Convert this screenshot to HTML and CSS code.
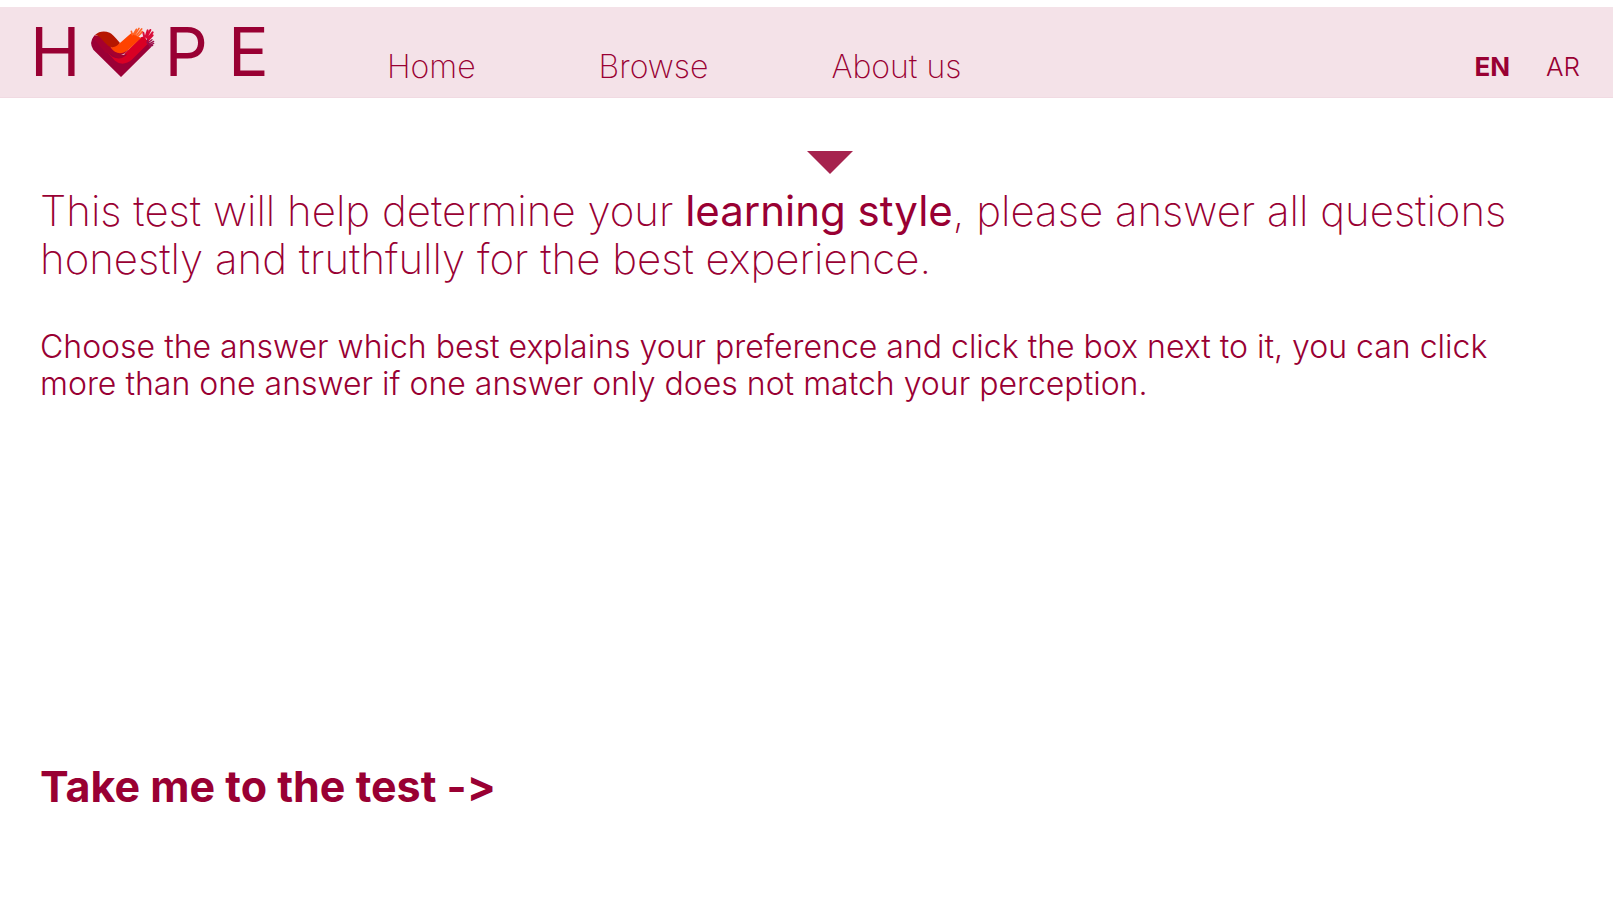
FILE: index.html
```html
<!DOCTYPE html>
<html lang="en">
<head>
<meta charset="utf-8">
<meta name="viewport" content="width=device-width, initial-scale=1">
<title>HOPE</title>
<link rel="stylesheet" href="styles.css">
</head>
<body>
<header class="header">
  <a class="logo" href="#">
    <span class="letter">H</span>
    <svg class="heart" viewBox="34 19 192 150" role="img" aria-label="O">
      <path fill="#9b0036" d="M44 45Q26 64 41 87L124 169 214 80 206 62 190 60 124 110 60 45Z"/>
      <path fill="#a6002f" d="M45 44Q62 48 84 72L110 98Q124 106 140 100L130 112Q108 114 96 100L78 96 40 52Z"/>
      <path fill="#d90024" d="M84 96L98 108Q122 120 140 104L191 50 210 64 158 116Q130 140 106 120Z"/>
      <path fill="#a6002f" d="M72 76L92 80Q116 104 148 86L136 98Q112 112 92 98Z"/>
      <path fill="#d90024" d="M148 86L184 50 196 46 200 60 150 104 134 100Z"/>
      <path fill="#b61600" d="M46 43Q64 27 90 36 98 39 121 67L112 79 98 82Q86 78 76 66L62 51Q54 43 46 43Z"/>
      <path fill="#ff4300" d="M92 80Q108 82 120 68L156 36 184 52 148 86Q116 112 92 80Z"/>
      <path fill="none" stroke="#ff6426" stroke-width="5" stroke-linecap="round" d="M158 42L155 32M162 40L170 26M166 42L178 23M171 44L186 25M176 46L188 33"/>
      <path fill="none" stroke="#d90b38" stroke-width="6" stroke-linecap="round" d="M194 50L191 36M198 48L204 29M201 50L212 28M204 54L219 35M206 58L219 44"/>
      <path fill="none" stroke="#9b0d49" stroke-width="4" stroke-linecap="round" d="M202 66L204 57M203 68L217 57M206 71L222 62M209 74L222 68M210 78L219 74"/>
    </svg>
    <span class="letter">P</span>
    <span class="letter last">E</span>
  </a>
  <nav class="nav">
    <a href="#">Home</a>
    <a href="#">Browse</a>
    <a href="#">About us</a>
  </nav>
  <div class="languages">
    <a class="current" href="#">EN</a>
    <a href="#">AR</a>
  </div>
</header>
<main class="main">
  <svg class="marker" viewBox="0 0 46 23" aria-hidden="true"><path fill="#a6234e" d="M0 0H46L23 23Z"/></svg>
  <h1 class="intro">This test will help determine your <strong>learning style</strong>, please answer all questions<br>honestly and truthfully for the best experience.</h1>
  <p class="hint">Choose the answer which best explains your preference and click the box next to it, you can click<br>more than one answer if one answer only does not match your perception.</p>
  <a class="start" href="#">Take me to the test -&gt;</a>
</main>
</body>
</html>
```
FILE: styles.css
```css
* { box-sizing: border-box; }
body {
  margin: 0;
  padding-top: 7px;
  min-height: 100vh;
  background: #fff;
  color: #990033;
  font-family: Inter, "Liberation Sans", sans-serif;
}
a { color: inherit; text-decoration: none; }
.header {
  display: flex;
  align-items: flex-end;
  min-height: 91px;
  padding: 0 33px 12px 30px;
  background: #f4e2e8;
  border-bottom: 1px solid #f1dae2;
}
.logo {
  display: flex;
  align-items: flex-end;
  gap: 10px;
  width: 244px;
  margin: 0 113px 5px 0;
}
.letter { font-size: 68px; line-height: 58px; font-weight: 400; }
.last { margin-left: 10px; }
.heart { width: 64px; height: 50px; flex: none; margin-bottom: 3px; }
.nav { display: flex; gap: 123px; font-size: 32px; line-height: 36px; font-weight: 200; flex: 1; }
.languages { display: flex; gap: 36px; font-size: 26px; line-height: 36px; font-weight: 300; }
.current { font-weight: 700; }
.main { display: flex; flex-direction: column; align-items: flex-start; padding: 53px 40px 40px; }
.marker { width: 46px; height: 23px; align-self: center; margin-left: 46px; }
.intro { margin: 13px 0 0; font-size: 42px; line-height: 48px; font-weight: 200; }
.intro strong { font-weight: 400; }
.hint { margin: 45px 0 0; font-size: 32px; line-height: 37px; font-weight: 300; }
.start {
  margin-top: 360px;
  font-size: 43px;
  line-height: 48px;
  font-weight: 700;
  font-feature-settings: "calt" 0;
}
```
